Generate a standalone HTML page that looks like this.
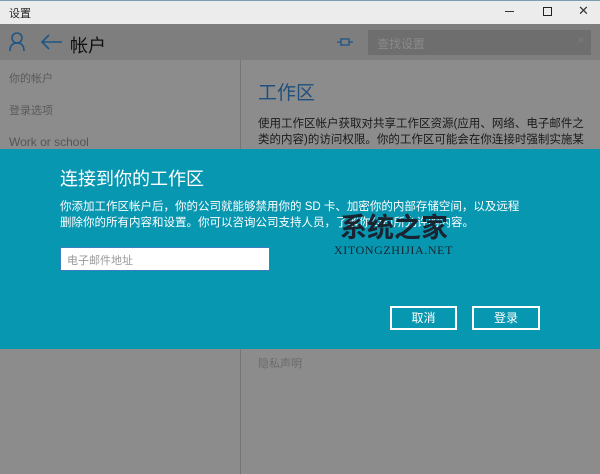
<!DOCTYPE html>
<html><head><meta charset="utf-8"><style>
*{margin:0;padding:0;box-sizing:border-box}
body{width:600px;height:474px;overflow:hidden;position:relative;background:#8c8c8c;font-family:"Liberation Sans","Noto Sans CJK SC",sans-serif}
.abs{position:absolute}
</style></head><body>
<div class="abs" style="left:0;top:0;width:600px;height:24px;background:#ececec;border-top:1px solid #7a9fb0"></div>
<div class="abs" style="left:9px;top:5px;font-size:11px;color:#222">设置</div>
<div class="abs" style="left:505px;top:11px;width:9px;height:1px;background:#333"></div>
<div class="abs" style="left:543px;top:7px;width:9px;height:9px;border:1px solid #222"></div>
<div class="abs" style="left:578px;top:3px;font-size:13px;color:#333">✕</div>
<div class="abs" style="left:0;top:24px;width:600px;height:36px;background:#7e7e7e"></div>
<svg class="abs" style="left:8px;top:31px" width="20" height="22"><circle cx="9" cy="7" r="5" fill="none" stroke="#1f5585" stroke-width="1.6"/><path d="M2 20 Q2 12 9 12 Q16 12 16 20" fill="none" stroke="#1f5585" stroke-width="1.6"/></svg>
<svg class="abs" style="left:40px;top:33px" width="24" height="18"><path d="M2 9 H22 M9 2 L2 9 L9 16" fill="none" stroke="#1f5585" stroke-width="1.6"/></svg>
<div class="abs" style="left:70px;top:32px;font-size:18px;color:#111">帐户</div>
<svg class="abs" style="left:336px;top:36px" width="18" height="12"><path d="M1 6 H5 M5 2 V10 M5 3 H13 V9 H5 M13 6 H17" fill="none" stroke="#1f5585" stroke-width="1.3"/></svg>
<div class="abs" style="left:368px;top:30px;width:223px;height:25px;background:#6e6e6e"></div>
<div class="abs" style="left:377px;top:35px;font-size:12px;color:#8a8a8a">查找设置</div>
<div class="abs" style="left:578px;top:34px;font-size:11px;color:#888">⌕</div>
<div class="abs" style="left:240px;top:60px;width:1px;height:414px;background:#757575"></div>
<div class="abs" style="left:9px;top:70px;font-size:11px;color:#5a5a5a">你的帐户</div>
<div class="abs" style="left:9px;top:102px;font-size:11px;color:#5a5a5a">登录选项</div>
<div class="abs" style="left:9px;top:135px;font-size:12px;color:#555">Work or school</div>
<div class="abs" style="left:258px;top:78px;font-size:19px;color:#1f507e">工作区</div>
<div class="abs" style="left:258px;top:116px;width:336px;font-size:11.5px;line-height:16px;color:#1a1a1a">使用工作区帐户获取对共享工作区资源(应用、网络、电子邮件之类的内容)的访问权限。你的工作区可能会在你连接时强制实施某些公司策略。</div>
<div class="abs" style="left:0;top:149px;width:600px;height:200px;background:#0897b1"></div>
<div class="abs" style="left:60px;top:165px;font-size:18px;color:#fff">连接到你的工作区</div>
<div class="abs" style="left:60px;top:199px;width:470px;font-size:11.5px;line-height:16px;color:#fff;white-space:nowrap">你添加工作区帐户后，你的公司就能够禁用你的 SD 卡、加密你的内部存储空间，以及远程<br>删除你的所有内容和设置。你可以咨询公司支持人员，了解你公司所允许的内容。</div>
<div class="abs" style="left:60px;top:247px;width:210px;height:24px;background:#fff;border:1px solid #3a7fc0"></div>
<div class="abs" style="left:67px;top:252px;font-size:11px;color:#999">电子邮件地址</div>
<div class="abs" style="left:340px;top:213px;font-size:27px;font-weight:bold;color:#1a2430;line-height:30px">系统之家</div>
<div class="abs" style="left:334px;top:243px;font-size:12px;color:#1a2430;font-family:'Liberation Serif',serif;letter-spacing:0.6px">XITONGZHIJIA.NET</div>
<div class="abs" style="left:390px;top:306px;width:67px;height:24px;border:2px solid #fff;color:#fff;font-size:12px;text-align:center;line-height:20px">取消</div>
<div class="abs" style="left:472px;top:306px;width:68px;height:24px;border:2px solid #fff;color:#fff;font-size:12px;text-align:center;line-height:20px">登录</div>
<div class="abs" style="left:258px;top:355px;font-size:11px;color:#6a6a6a">隐私声明</div>
</body></html>
